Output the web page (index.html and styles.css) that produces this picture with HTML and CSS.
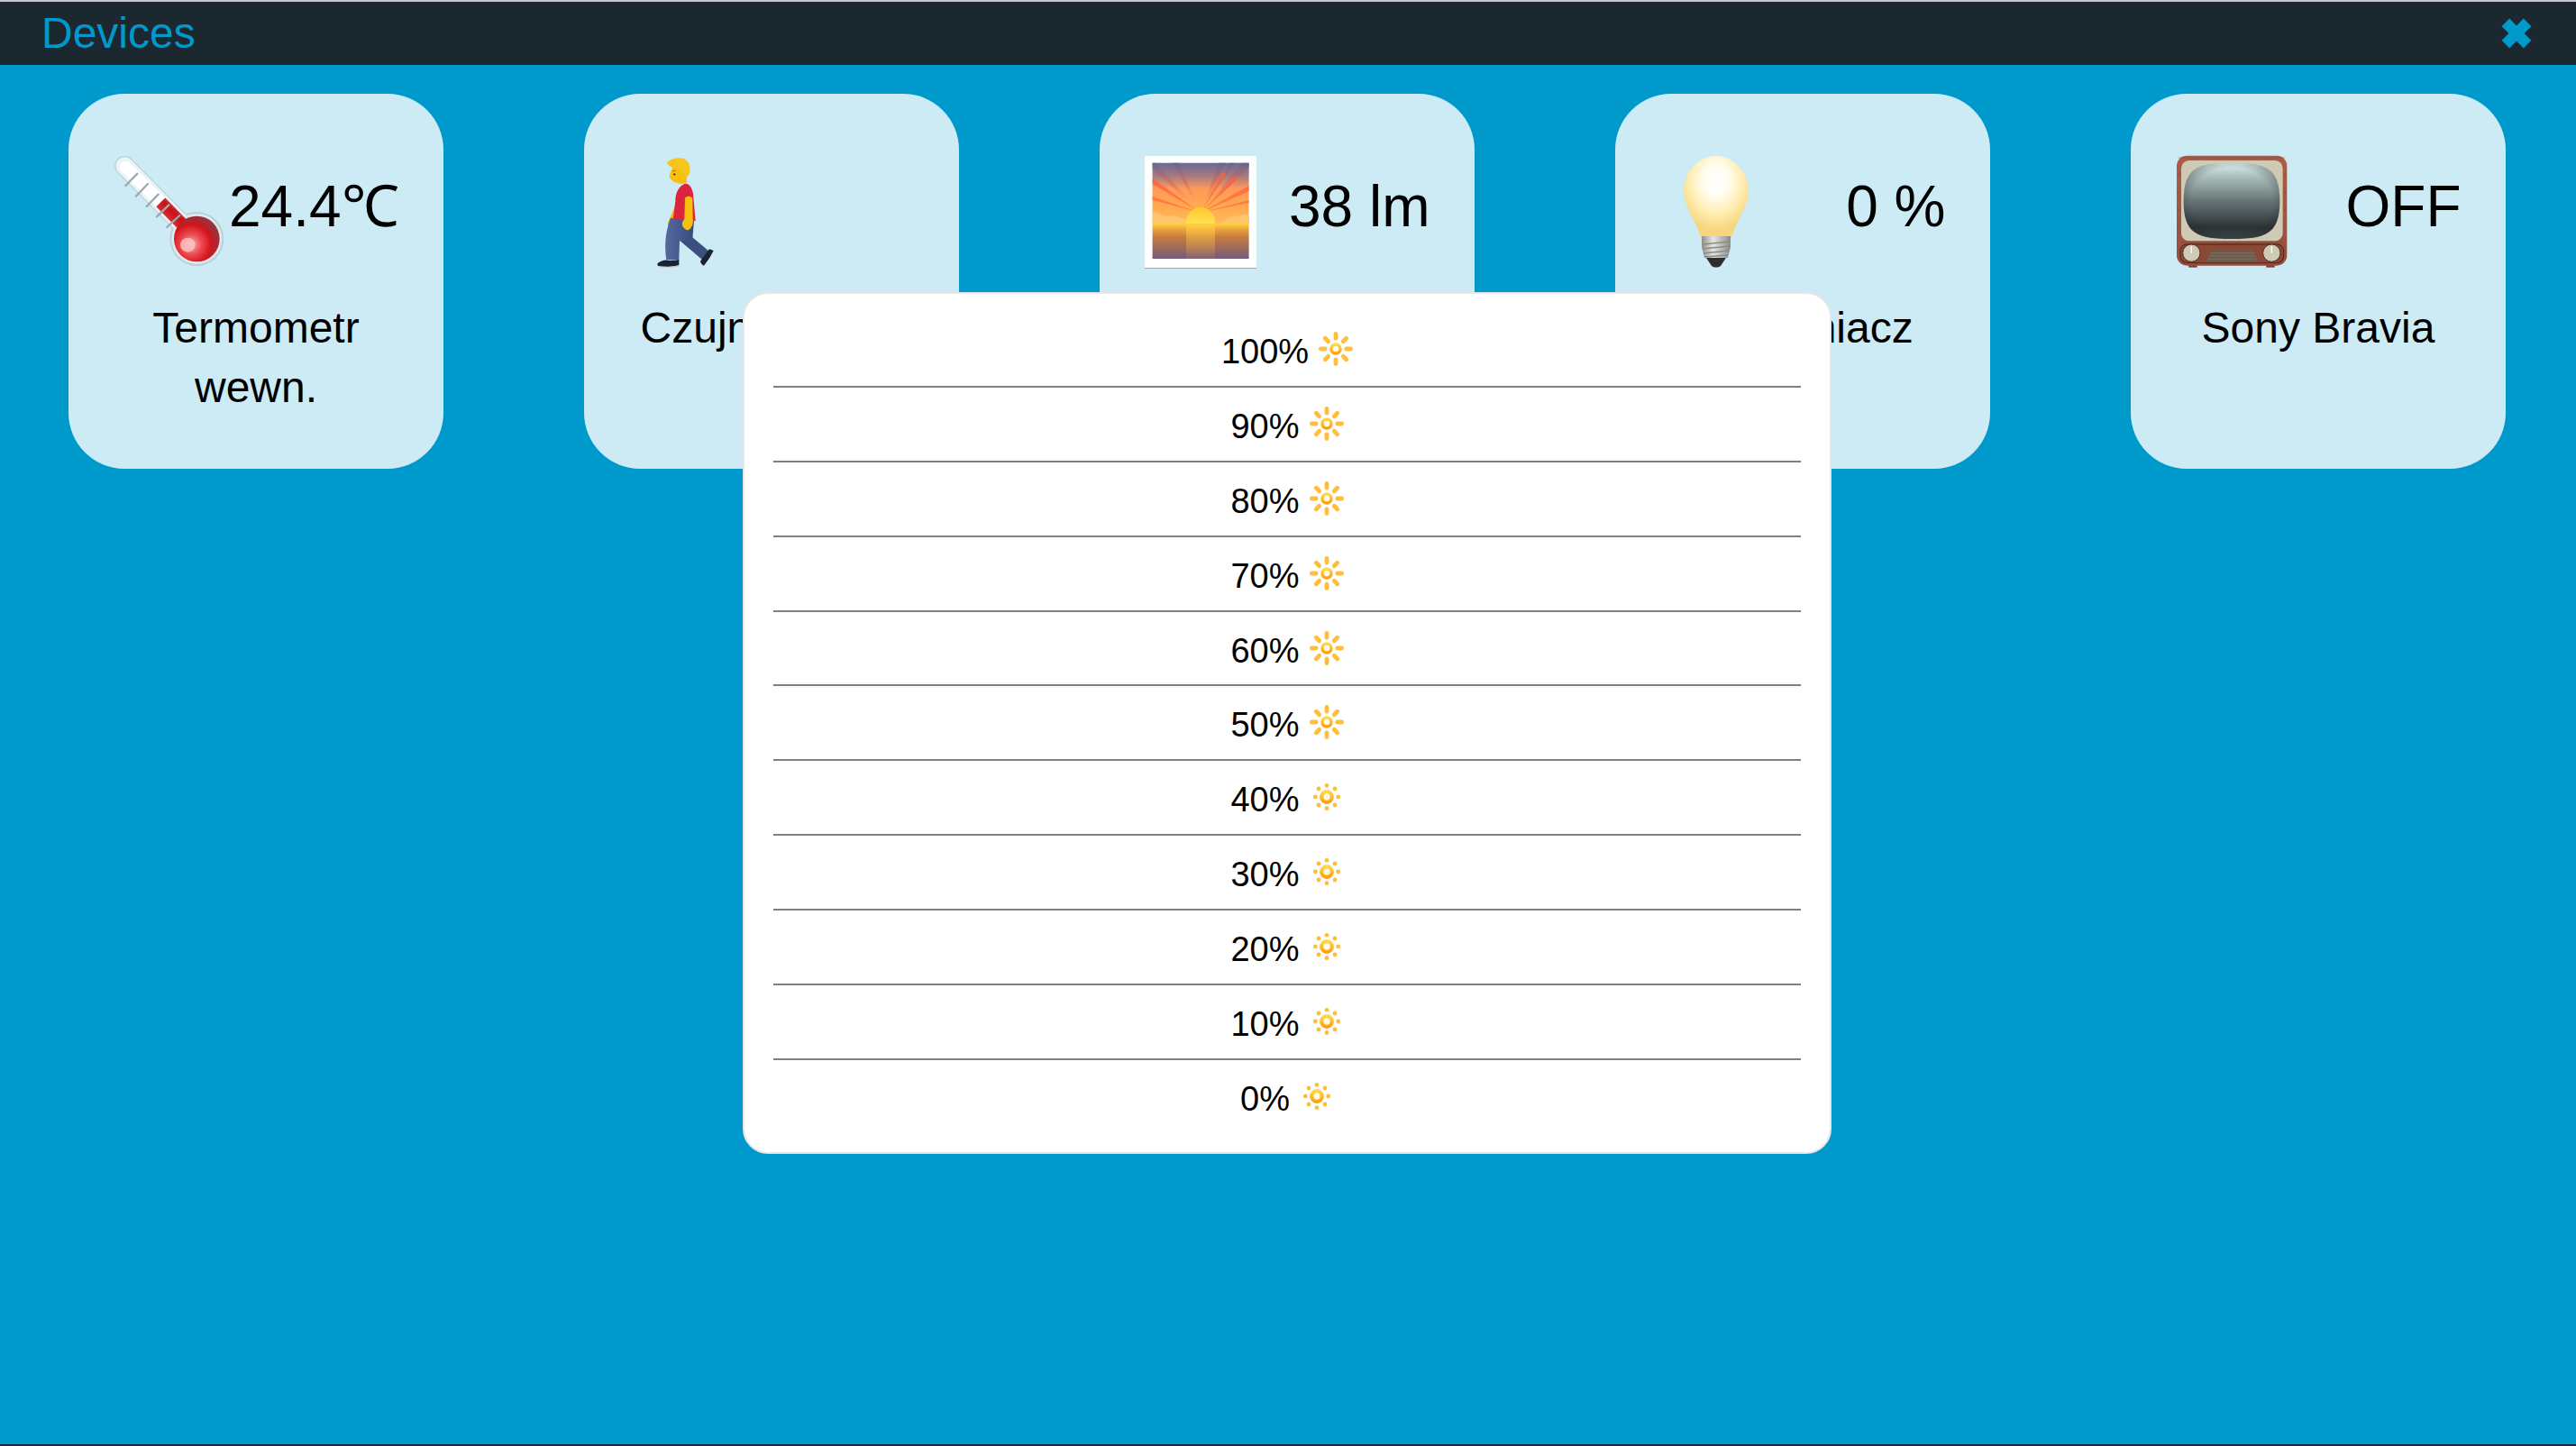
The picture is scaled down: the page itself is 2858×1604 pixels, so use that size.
FILE: index.html
```html
<!DOCTYPE html>
<html lang="pl">
<head>
<meta charset="utf-8">
<title>Devices</title>
<link rel="stylesheet" href="styles.css">
</head>
<body>
<svg class="defs" width="0" height="0" aria-hidden="true">
  <defs>
    <linearGradient id="sunRing" x1="0" y1="0" x2="0" y2="1"><stop offset="0" stop-color="#ffd84f"/><stop offset="1" stop-color="#ffa00f"/></linearGradient>
    <symbol id="sun-big" viewBox="6 3 38 38">
      <g stroke="#ffbf3c" stroke-width="4.8" stroke-linecap="round">
        <path d="M25 5.4V10.2M25 33.8V38.6M8.4 22H13.2M36.8 22H41.6M13.3 10.3L16.7 13.7M33.3 30.3L36.7 33.7M13.3 33.7L16.7 30.3M33.3 13.7L36.7 10.3"/>
      </g>
      <circle cx="25" cy="22" r="5" fill="#fffbe8" stroke="url(#sunRing)" stroke-width="3.6"/>
    </symbol>
    <symbol id="sun-small" viewBox="6 3 38 38">
      <g fill="#ffbe3a">
        <circle cx="25" cy="9.3" r="2.4"/><circle cx="25" cy="34.7" r="2.4"/><circle cx="12.3" cy="22" r="2.4"/><circle cx="37.7" cy="22" r="2.4"/>
        <circle cx="16" cy="13" r="2.4"/><circle cx="34" cy="13" r="2.4"/><circle cx="16" cy="31" r="2.4"/><circle cx="34" cy="31" r="2.4"/>
      </g>
      <circle cx="25" cy="22" r="5.8" fill="#fffbe0" stroke="url(#sunRing)" stroke-width="4.3"/>
    </symbol>
    <radialGradient id="bulbRed" cx=".38" cy=".62" r=".75">
      <stop offset="0" stop-color="#f9b5b5"/><stop offset=".3" stop-color="#ee4a50"/><stop offset=".58" stop-color="#d0141c"/><stop offset="1" stop-color="#6f4a50"/>
    </radialGradient>
    <linearGradient id="tubeRed" x1="0" y1="1" x2="1" y2="0"><stop offset="0" stop-color="#ee5a5e"/><stop offset=".55" stop-color="#c81119"/><stop offset="1" stop-color="#ef6a6c"/></linearGradient>
    <linearGradient id="sky" x1="0" y1="0" x2="0" y2="1">
      <stop offset="0" stop-color="#6a6a92"/><stop offset=".22" stop-color="#a97a80"/><stop offset=".42" stop-color="#ff9a58"/><stop offset=".75" stop-color="#ffab4f"/><stop offset="1" stop-color="#ffbe5c"/>
    </linearGradient>
    <linearGradient id="rayCool" gradientUnits="userSpaceOnUse" x1="0" y1="12" x2="0" y2="68">
      <stop offset="0" stop-color="#5f6592" stop-opacity=".9"/><stop offset=".45" stop-color="#e0705a" stop-opacity=".7"/><stop offset="1" stop-color="#ffd268" stop-opacity=".3"/>
    </linearGradient>
    <linearGradient id="rayHot" gradientUnits="userSpaceOnUse" x1="0" y1="20" x2="0" y2="68">
      <stop offset="0" stop-color="#ff5f3c" stop-opacity=".9"/><stop offset="1" stop-color="#ff6a3c" stop-opacity=".6"/>
    </linearGradient>
    <linearGradient id="sea" x1="0" y1="0" x2="0" y2="1">
      <stop offset="0" stop-color="#ffd23f"/><stop offset=".16" stop-color="#e9a53a"/><stop offset=".4" stop-color="#c47a42"/><stop offset="1" stop-color="#745a78"/>
    </linearGradient>
    <linearGradient id="seaGlow" x1="0" y1="0" x2="0" y2="1">
      <stop offset="0" stop-color="#ffcf40" stop-opacity=".7"/><stop offset="1" stop-color="#e8a84a" stop-opacity=".1"/>
    </linearGradient>
    <linearGradient id="sunDisc" x1="0" y1="0" x2="0" y2="1"><stop offset="0" stop-color="#ffc92e"/><stop offset="1" stop-color="#fff56e"/></linearGradient>
    <radialGradient id="bulbGlass" cx=".5" cy=".3" r=".6">
      <stop offset="0" stop-color="#ffffff"/><stop offset=".32" stop-color="#fffdf0"/><stop offset=".68" stop-color="#ffedb0"/><stop offset="1" stop-color="#f8d680"/>
    </radialGradient>
    <linearGradient id="metal" x1="0" y1="0" x2="1" y2="0"><stop offset="0" stop-color="#8f8f8c"/><stop offset=".4" stop-color="#e6e6e2"/><stop offset="1" stop-color="#8a8a86"/></linearGradient>
    <linearGradient id="screen" x1="0" y1="0" x2="0" y2="1">
      <stop offset="0" stop-color="#dff2ee"/><stop offset=".16" stop-color="#b0c4c1"/><stop offset=".5" stop-color="#667476"/><stop offset=".85" stop-color="#2e3335"/><stop offset="1" stop-color="#3c4445"/>
    </linearGradient>
    <radialGradient id="screenEdge" cx=".5" cy=".5" r=".66">
      <stop offset=".65" stop-color="#20282a" stop-opacity="0"/><stop offset="1" stop-color="#20282a" stop-opacity=".55"/>
    </radialGradient>
    <linearGradient id="wood" x1="0" y1="0" x2="0" y2="1"><stop offset="0" stop-color="#ac5c46"/><stop offset="1" stop-color="#94503e"/></linearGradient>
    <linearGradient id="jeans" x1="0" y1="0" x2="1" y2="0"><stop offset="0" stop-color="#54699c"/><stop offset="1" stop-color="#3a4c7e"/></linearGradient>
  </defs>
</svg>

<div class="app">
  <header class="topbar">
    <h1 class="title">Devices</h1>
    <svg class="close" viewBox="0 0 34 34" aria-label="Close">
      <path d="M9.2 .6L17 8.4 24.8 .6 33.4 9.2 25.6 17 33.4 24.8 24.8 33.4 17 25.6 9.2 33.4 .6 24.8 8.4 17 .6 9.2Z"/>
    </svg>
  </header>

  <main class="devices">
    <article class="card">
      <div class="card-top">
        <svg class="icon" viewBox="0 0 128 134">
          <g transform="translate(-14 -8) scale(.3333)">
            <path d="M85 72L325 315" stroke="#bccfd8" stroke-width="66" stroke-linecap="round"/>
            <circle cx="325" cy="315" r="90" fill="#bccfd8"/>
            <path d="M85 72L325 315" stroke="#eaf4f8" stroke-width="59" stroke-linecap="round"/>
            <circle cx="325" cy="315" r="84" fill="#dfeaef"/>
            <path d="M88 76L210 198" stroke="#ffffff" stroke-width="40" stroke-linecap="round"/>
            <path d="M205 193L300 290" stroke="url(#tubeRed)" stroke-width="42"/>
            <circle cx="325" cy="315" r="76" fill="url(#bulbRed)"/>
            <ellipse cx="295" cy="335" rx="25" ry="24" fill="#fbc4c4" opacity=".8"/>
            <g stroke="#a2a9ab" stroke-width="7" stroke-linecap="round" fill="none">
              <path d="M88 138L127 98M123 173L162 132M158 207L197 167M192 241L232 202M226 276L268 237"/>
            </g>
          </g>
        </svg>
        <span class="value">24.4℃</span>
      </div>
      <p class="name">Termometr wewn.</p>
    </article>

    <article class="card">
      <div class="card-top">
        <svg class="icon" viewBox="0 0 128 134">
          <g transform="translate(4 -8) scale(.3333)">
            <path d="M152 185C145 215 132 240 122 262C120 272 132 276 136 268L160 215Z" fill="#f5b90c"/>
            <path d="M162 320L205 310L262 358L237 384Z" fill="#3d4f80"/>
            <path d="M132 245L210 255L205 315L162 322L160 385L118 385C112 345 112 300 132 245Z" fill="url(#jeans)"/>
            <path d="M89 396C100 388 112 384 122 386C135 388 150 386 160 384L160 402C150 408 105 410 92 406C88 404 88 399 89 396Z" fill="#1a2238"/>
            <path d="M92 405C110 408 145 408 160 402L160 407C140 411 105 411 92 408Z" fill="#c9c9c4"/>
            <path d="M231 389L261 349L275 354L262 378L243 404C237 402 232 396 231 389Z" fill="#1a2238"/>
            <path d="M148 190C148 160 160 140 178 132C195 128 205 150 207 165L215 255L140 250Z" fill="#dc2340"/>
            <path d="M180 178C190 170 202 172 205 182L206 250C210 270 195 290 185 285C170 280 165 262 178 250Z" fill="#f8c00e"/>
            <path d="M130 98L128 110C135 120 145 128 155 128C165 135 170 130 185 130C188 118 185 100 180 88L140 75Z" fill="#f8c00e"/>
            <path d="M120 62C125 52 145 45 165 46C190 48 202 72 195 95C192 105 188 110 182 112C178 98 170 88 160 80C145 80 128 78 120 62Z" fill="#f8c51c"/>
            <circle cx="145" cy="100" r="3.5" fill="#4a3410"/>
            <path d="M136 90L150 87" stroke="#b9860c" stroke-width="3"/>
          </g>
        </svg>
        <span class="value"></span>
      </div>
      <p class="name">Czujnik ruchu</p>
    </article>

    <article class="card">
      <div class="card-top">
        <svg class="icon" viewBox="0 0 128 134">
          <rect x="2" y="6" width="124" height="124" fill="#8fb2bd"/>
          <rect x="2" y="5" width="124" height="124" fill="#ffffff"/>
          <rect x="10.6" y="12.7" width="107" height="68" fill="url(#sky)"/>
          <g fill="url(#rayCool)">
            <path d="M64 68L33 12.7H40Z"/><path d="M64 68L84 12.7H92Z"/><path d="M64 68L97 12.7H102Z"/><path d="M64 68L10.6 19V12.7H14Z"/><path d="M64 68L110 12.7H117.7V18Z"/>
          </g>
          <g fill="url(#rayHot)">
            <path d="M64 68L10.6 30V36Z"/><path d="M64 68L10.6 50V54Z"/><path d="M64 68L117.7 38V44Z"/><path d="M64 68L117.7 54V57Z"/><path d="M64 68L88 24L92 24Z"/><path d="M64 68L102 28L106 30Z"/>
          </g>
          <path d="M10.6 66C18 70 24 72 32 71C38 72 42 74 50 76L50 80H10.6Z" fill="#ffc56e"/>
          <path d="M117.7 70C110 68 106 74 100 72C94 74 92 78 84 80H117.7Z" fill="#ffc56e"/>
          <circle cx="64" cy="78" r="16" fill="url(#sunDisc)"/>
          <rect x="10.6" y="80" width="107" height="39" fill="url(#sea)"/>
          <rect x="48" y="82" width="32" height="37" fill="url(#seaGlow)"/>
        </svg>
        <span class="value">38 lm</span>
      </div>
      <p class="name">Czujnik światła</p>
    </article>

    <article class="card">
      <div class="card-top">
        <svg class="icon" viewBox="0 0 128 134">
          <path d="M64 5C84 5 100 24 100 44C100 62 86 76 81 96H47C42 76 28 62 28 44C28 24 44 5 64 5Z" fill="url(#bulbGlass)"/>
          <path d="M48 94H80V106L77 118H51L48 106Z" fill="url(#metal)"/>
          <g stroke="#8b8b88" stroke-width="1.6" fill="none"><path d="M49 103L79 100M49 108L79 105M50 113L78 110M51 117L77 115"/></g>
          <path d="M53 118H75L69 127C66 129 62 129 59 127Z" fill="#2e2e2e"/>
        </svg>
        <span class="value">0 %</span>
      </div>
      <p class="name">Ściemniacz</p>
    </article>

    <article class="card">
      <div class="card-top">
        <svg class="icon" viewBox="0 0 128 134">
          <g transform="translate(-12 -8) scale(.3333)">
            <rect x="85" y="390" width="28" height="20" fill="#7f3e2e"/>
            <rect x="343" y="390" width="28" height="20" fill="#7f3e2e"/>
            <rect x="45" y="38" width="367" height="366" rx="34" fill="url(#wood)"/>
            <g stroke="#7d3f2f" stroke-width="2" fill="none" opacity=".7">
              <path d="M50 45H405M48 100H56M48 160H56M48 220H56M48 280H56M402 100H410M402 160H410M402 220H410M402 280H410M60 327H398"/>
            </g>
            <rect x="60" y="54" width="338" height="268" rx="26" fill="#d0c9b4"/>
            <path d="M228 62C340 62 388 75 388 190C388 300 340 315 228 315C115 315 68 300 68 190C68 75 115 62 228 62Z" fill="url(#screen)"/>
            <path d="M228 62C340 62 388 75 388 190C388 300 340 315 228 315C115 315 68 300 68 190C68 75 115 62 228 62Z" fill="url(#screenEdge)"/>
            <rect x="57" y="333" width="344" height="62" rx="22" fill="#8a4836" stroke="#5b3023" stroke-width="4"/>
            <path d="M160 352H300L318 392H142Z" fill="#6e5a4c"/>
            <g stroke="#8c7868" stroke-width="2"><path d="M156 362H304M151 372H309M147 382H313"/></g>
            <circle cx="94" cy="362" r="29" fill="#d0cab4" stroke="#4e2e22" stroke-width="3"/>
            <circle cx="361" cy="362" r="29" fill="#d0cab4" stroke="#4e2e22" stroke-width="3"/>
            <path d="M94 340V362M361 340V362" stroke="#ffffff" stroke-width="4"/>
          </g>
        </svg>
        <span class="value">OFF</span>
      </div>
      <p class="name">Sony Bravia</p>
    </article>
  </main>

  <section class="dimmer">
    <div class="level"><span class="pct">100%</span><svg class="sun"><use href="#sun-big"/></svg></div>
    <div class="level"><span class="pct">90%</span><svg class="sun"><use href="#sun-big"/></svg></div>
    <div class="level"><span class="pct">80%</span><svg class="sun"><use href="#sun-big"/></svg></div>
    <div class="level"><span class="pct">70%</span><svg class="sun"><use href="#sun-big"/></svg></div>
    <div class="level"><span class="pct">60%</span><svg class="sun"><use href="#sun-big"/></svg></div>
    <div class="level"><span class="pct">50%</span><svg class="sun"><use href="#sun-big"/></svg></div>
    <div class="level"><span class="pct">40%</span><svg class="sun"><use href="#sun-small"/></svg></div>
    <div class="level"><span class="pct">30%</span><svg class="sun"><use href="#sun-small"/></svg></div>
    <div class="level"><span class="pct">20%</span><svg class="sun"><use href="#sun-small"/></svg></div>
    <div class="level"><span class="pct">10%</span><svg class="sun"><use href="#sun-small"/></svg></div>
    <div class="level"><span class="pct">0%</span><svg class="sun"><use href="#sun-small"/></svg></div>
  </section>

  <div class="bottom-edge"></div>
</div>
</body>
</html>
```

FILE: styles.css
```css
* {
  box-sizing: border-box;
}

html,
body {
  margin: 0;
  height: 100%;
}

body {
  font-family: "Liberation Sans", Arial, sans-serif;
  color: #000;
  background: #0099cc;
  overflow: hidden;
}

.defs {
  position: absolute;
}

.app {
  position: relative;
  display: flex;
  flex-direction: column;
  height: 100vh;
}

.topbar {
  display: flex;
  flex: none;
  align-items: center;
  justify-content: space-between;
  height: 72px;
  padding: 0 49px 0 46px;
  background: #1c2830;
  border-top: 2px solid #c8c8c8;
}

.title {
  margin: 0;
  font-size: 48px;
  font-weight: 400;
  line-height: 68px;
  color: #0099cc;
}

.close {
  width: 34px;
  height: 34px;
  fill: #0099cc;
}

.devices {
  flex: 1;
  display: flex;
  align-items: flex-start;
  gap: 156px;
  padding: 32px 0 0 76px;
}

.card {
  flex: none;
  width: 416px;
  height: 416px;
  padding-top: 64px;
  border-radius: 62px;
  background: #ccebf5;
}

.card-top {
  display: flex;
  align-items: center;
  justify-content: space-between;
  height: 134px;
  padding: 0 49.5px 0 48px;
}

.icon {
  flex: none;
  width: 128px;
  height: 134px;
}

.value {
  padding-bottom: 12px;
  font-size: 64px;
  line-height: 74px;
  white-space: nowrap;
}

.name {
  margin: 29px 0 0;
  padding: 0 46px;
  font-size: 48px;
  line-height: 66px;
  text-align: center;
}

.dimmer {
  position: absolute;
  top: 324px;
  left: 824px;
  width: 1208px;
  padding: 21px 32px;
  border: 2px solid #e6e6e6;
  border-radius: 28px;
  background: #fff;
}

.level {
  display: flex;
  align-items: center;
  justify-content: center;
  gap: 11px;
  height: 82.9px;
  border-bottom: 2px solid #808080;
  font-size: 38px;
}

.level:last-child {
  height: 80.9px;
  border-bottom: 0;
}

.pct {
  margin-top: 5px;
  line-height: 44px;
}

.sun {
  flex: none;
  width: 38px;
  height: 38px;
  margin-bottom: 1px;
}

.bottom-edge {
  flex: none;
  height: 2px;
  background: #1c2830;
}
```
